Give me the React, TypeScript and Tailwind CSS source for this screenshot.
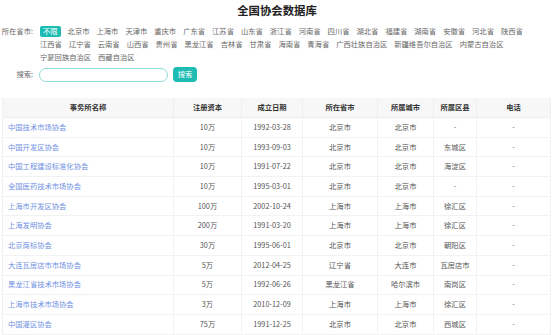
import React from "react";

const row1 = ["北京市","上海市","天津市","重庆市","广东省","江苏省","山东省","浙江省","河南省","四川省","湖北省","福建省","湖南省","安徽省","河北省","陕西省"];
const row2 = ["江西省","辽宁省","云南省","山西省","贵州省","黑龙江省","吉林省","甘肃省","海南省","青海省","广西壮族自治区","新疆维吾尔自治区","内蒙古自治区"];
const row3 = ["宁夏回族自治区","西藏自治区"];

const data: string[][] = [
  ["中国技术市场协会","10万","1992-03-28","北京市","北京市","-","-"],
  ["中国开发区协会","10万","1993-09-03","北京市","北京市","东城区","-"],
  ["中国工程建设标准化协会","10万","1991-07-22","北京市","北京市","海淀区","-"],
  ["全国医药技术市场协会","10万","1995-03-01","北京市","北京市","-","-"],
  ["上海市开发区协会","100万","2002-10-24","上海市","上海市","徐汇区","-"],
  ["上海发明协会","200万","1991-03-20","上海市","上海市","徐汇区","-"],
  ["北京商标协会","30万","1995-06-01","北京市","北京市","朝阳区","-"],
  ["大连瓦房店市市场协会","5万","2012-04-25","辽宁省","大连市","瓦房店市","-"],
  ["黑龙江省技术市场协会","5万","1992-06-26","黑龙江省","哈尔滨市","南岗区","-"],
  ["上海市技术市场协会","3万","2010-12-09","上海市","上海市","徐汇区","-"],
  ["中国灌区协会","75万","1991-12-25","北京市","北京市","西城区","-"],
];

const headers = ["事务所名称","注册资本","成立日期","所在省市","所属城市","所属区县","电话"];

export default function App() {
  const font = { fontFamily: '"Noto Sans CJK SC", "Noto Sans", sans-serif' };
  return (
    <div className="w-[554px] h-[335px] overflow-hidden bg-white text-[#555]" style={font}>
      <div className="h-[20px] leading-[20px] text-center text-[11.4px] font-bold text-[#222]">全国协会数据库</div>

      <div className="mt-[5px] flex">
        <div className="w-[33px] text-right text-[7.3px] leading-[13px] text-[#666]">所在省市:</div>
        <div className="ml-[7px] flex flex-col text-[7.3px] leading-[13px] text-[#666]">
          <div className="flex h-[13px] items-center gap-x-[7px]">
            <span className="rounded-[2px] bg-[#1cbcb2] px-[3px] leading-[11px] text-white">不限</span>
            {row1.map((p) => (<span key={p}>{p}</span>))}
          </div>
          <div className="flex h-[13px] items-center gap-x-[7px]">
            {row2.map((p) => (<span key={p}>{p}</span>))}
          </div>
          <div className="flex h-[13px] items-center gap-x-[7px]">
            {row3.map((p) => (<span key={p}>{p}</span>))}
          </div>
        </div>
      </div>

      <div className="mt-[3px] flex h-[15px] items-center">
        <div className="w-[33px] text-right text-[7.3px] text-[#666]">搜索:</div>
        <div className="ml-[6px] h-[14px] w-[129px] rounded-full border border-[#8fdcd6] bg-white" />
        <div className="ml-[5px] flex h-[15px] w-[24px] items-center justify-center rounded-[4px] bg-[#1cbcb2] text-[7.3px] text-white">搜索</div>
      </div>

      <div className="ml-[2px] mt-[16px] w-[548px] border-l border-[#f0f0f0] text-[7.3px]">
        <div className="grid h-[20px] grid-cols-[171px_68px_61px_75px_56px_43px_74px] bg-[#f7f7f7] font-bold text-[#333]">
          {headers.map((h) => (
            <div key={h} className="flex items-center justify-center border-r border-b border-[#eeeeee]">{h}</div>
          ))}
        </div>
        {data.map((r, i) => (
          <div key={i} className="grid h-[19.7px] grid-cols-[171px_68px_61px_75px_56px_43px_74px]">
            {r.map((c, j) => (
              <div
                key={j}
                className={
                  j === 0
                    ? "flex items-center border-r border-b border-[#f2f2f2] pl-[5px] text-[#7090e3]"
                    : "flex items-center justify-center border-r border-b border-[#f2f2f2] text-[#555]"
                }
              >
                {c}
              </div>
            ))}
          </div>
        ))}
      </div>
    </div>
  );
}
